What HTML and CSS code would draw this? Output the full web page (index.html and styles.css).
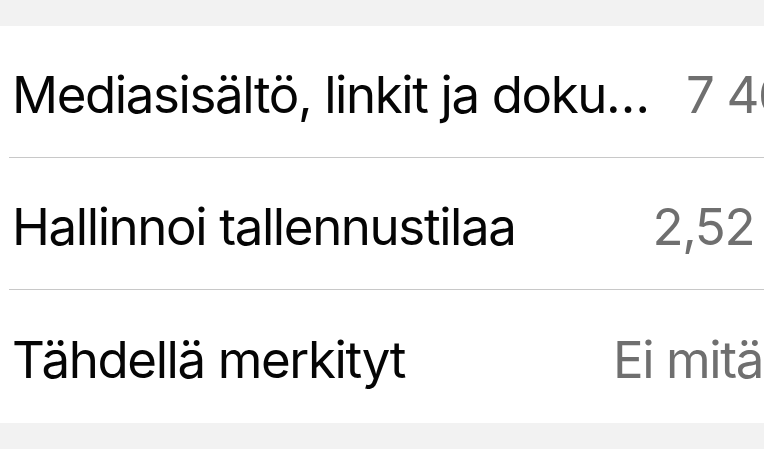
FILE: index.html
```html
<!DOCTYPE html>
<html lang="fi">
<head>
<meta charset="utf-8">
<title>Keskustelun tiedot</title>
<link rel="stylesheet" href="styles.css">
</head>
<body>
  <div class="screen">
    <ul class="group">
      <li class="row">
        <div class="cell">
          <span class="label">Mediasisältö, linkit ja doku…</span>
          <span class="value">7 460</span>
          <span class="chevron" aria-hidden="true">
            <svg width="16" height="28" viewBox="0 0 16 28"><path d="M3 3l10 11-10 11" fill="none" stroke="#c4c4c7" stroke-width="3.5" stroke-linecap="round" stroke-linejoin="round"/></svg>
          </span>
        </div>
      </li>
      <li class="row">
        <div class="cell">
          <span class="label">Hallinnoi tallennustilaa</span>
          <span class="value">2,52 Gt</span>
          <span class="chevron" aria-hidden="true">
            <svg width="16" height="28" viewBox="0 0 16 28"><path d="M3 3l10 11-10 11" fill="none" stroke="#c4c4c7" stroke-width="3.5" stroke-linecap="round" stroke-linejoin="round"/></svg>
          </span>
        </div>
      </li>
      <li class="row">
        <div class="cell">
          <span class="label">Tähdellä merkityt</span>
          <span class="value">Ei mitään</span>
          <span class="chevron" aria-hidden="true">
            <svg width="16" height="28" viewBox="0 0 16 28"><path d="M3 3l10 11-10 11" fill="none" stroke="#c4c4c7" stroke-width="3.5" stroke-linecap="round" stroke-linejoin="round"/></svg>
          </span>
        </div>
      </li>
    </ul>
  </div>
</body>
</html>
```

FILE: styles.css
```css
html, body {
  margin: 0;
  padding: 0;
  background: #f2f2f2;
  overflow: hidden;
}

.screen {
  width: 900px;
  padding-top: 26px;
  font-family: Inter, "Noto Sans", "Liberation Sans", sans-serif;
}

.group {
  list-style: none;
  margin: 0;
  padding: 0 0 0 9px;
  background: #ffffff;
}

.row {
  display: block;
}

.cell {
  display: flex;
  align-items: center;
  height: 132px;
  padding-top: 5px;
  box-sizing: border-box;
  padding-right: 45px;
  border-bottom: 1px solid #c8c8c8;
}

.row:last-child .cell {
  border-bottom: none;
  height: 133px;
}

.label {
  flex: 1;
  font-size: 51px;
  line-height: 1;
  color: #050505;
  letter-spacing: -1.4px;
  white-space: nowrap;
  padding-left: 3px;
}

.value {
  font-size: 51px;
  line-height: 1;
  color: #6f6f6f;
  letter-spacing: -1.4px;
  white-space: nowrap;
}

.chevron {
  display: flex;
  margin-left: 20px;
}
```
